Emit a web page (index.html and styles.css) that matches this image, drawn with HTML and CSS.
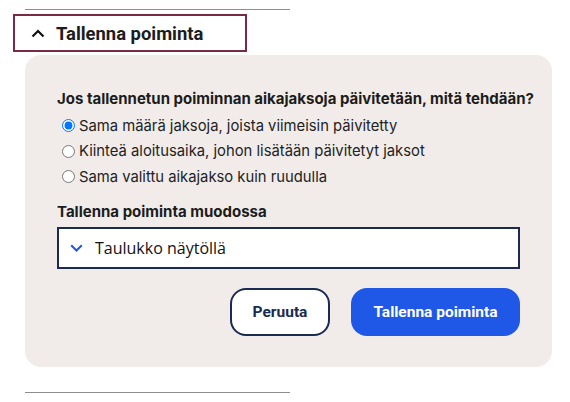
FILE: index.html
```html
<!DOCTYPE html>
<html lang="fi">
<head>
<meta charset="utf-8">
<link rel="stylesheet" href="styles.css">
</head>
<body>
<div class="page">
  <div class="rule"></div>
  <button class="toggle" type="button">
    <svg class="chev-up" width="14" height="9" viewBox="0 0 14 9"><path d="M1.5 7.5 L7 2 L12.5 7.5" fill="none" stroke="#111" stroke-width="2.2"/></svg>
    <span>Tallenna poiminta</span>
  </button>
  <div class="panel">
    <div class="question">Jos tallennetun poiminnan aikajaksoja päivitetään, mitä tehdään?</div>
    <label class="opt"><input type="radio" name="p" checked><span>Sama määrä jaksoja, joista viimeisin päivitetty</span></label>
    <label class="opt"><input type="radio" name="p"><span>Kiinteä aloitusaika, johon lisätään päivitetyt jaksot</span></label>
    <label class="opt"><input type="radio" name="p"><span>Sama valittu aikajakso kuin ruudulla</span></label>
    <div class="label2">Tallenna poiminta muodossa</div>
    <div class="select">
      <svg class="chev-down" width="13" height="8" viewBox="0 0 13 8"><path d="M1.2 1.2 L6.5 6.5 L11.8 1.2" fill="none" stroke="#1f57e7" stroke-width="2"/></svg>
      <span>Taulukko näytöllä</span>
    </div>
    <div class="actions">
      <button class="btn btn-outline" type="button">Peruuta</button>
      <button class="btn btn-primary" type="button">Tallenna poiminta</button>
    </div>
  </div>
  <div class="rule bottom"></div>
</div>
</body>
</html>
```
FILE: styles.css
```css
* { box-sizing: border-box; }
body {
  margin: 0;
  background: #fff;
  font-family: Inter, Roboto, "Liberation Sans", sans-serif;
  color: #1c1c1c;
}
.page {
  padding-top: 9px;
  display: flex;
  flex-direction: column;
  align-items: flex-start;
}
.rule {
  margin-left: 25px;
  width: 265px;
  height: 1px;
  background: #8e8e8e;
}
.rule.bottom { margin-top: 25px; }
.toggle {
  margin-top: 4px;
  margin-left: 13px;
  width: 234px;
  height: 38px;
  border: 2px solid #7b2a46;
  background: #fff;
  display: flex;
  align-items: center;
  gap: 11px;
  padding: 0 0 0 16px;
  font-family: Roboto, "Liberation Sans", sans-serif;
  font-size: 18.4px;
  font-weight: 700;
  color: #1c1c1c;
  cursor: pointer;
}
.chev-up { margin-top: 1px; }
.panel {
  margin-top: 3px;
  margin-left: 25px;
  width: 527px;
  height: 312px;
  background: #f1ecea;
  border-radius: 16px;
  padding: 35px 10px 0 32px;
  display: flex;
  flex-direction: column;
}
.question {
  font-size: 15px;
  font-weight: 700;
  line-height: 17px;
  margin-bottom: 6px;
  white-space: nowrap;
}
.opt {
  display: flex;
  align-items: center;
  height: 25.5px;
  font-size: 14.8px;
  color: #222;
}
.opt input {
  margin: 0 4px 0 5px;
  width: 13px;
  height: 13px;
}
.label2 {
  margin-top: 13px;
  font-size: 15px;
  font-weight: 700;
  line-height: 17px;
}
.select {
  margin-top: 7px;
  height: 42px;
  width: 463px;
  border: 2px solid #1b2a52;
  background: #fff;
  display: flex;
  align-items: center;
  gap: 12px;
  padding-left: 11px;
  font-family: "Open Sans", "Noto Sans", sans-serif;
  font-size: 16px;
  color: #111;
}
.actions {
  margin-top: 19px;
  display: flex;
  justify-content: flex-end;
  gap: 21px;
  width: 463px;
}
.btn {
  height: 48px;
  border-radius: 16px;
  font-family: Roboto, "Liberation Sans", sans-serif;
  font-size: 15.5px;
  font-weight: 700;
  cursor: pointer;
}
.btn-outline {
  width: 100px;
  background: #fff;
  border: 2px solid #1b2a52;
  color: #1b2a52;
}
.btn-primary {
  width: 169px;
  background: #1f57e7;
  border: none;
  color: #fff;
}
```
